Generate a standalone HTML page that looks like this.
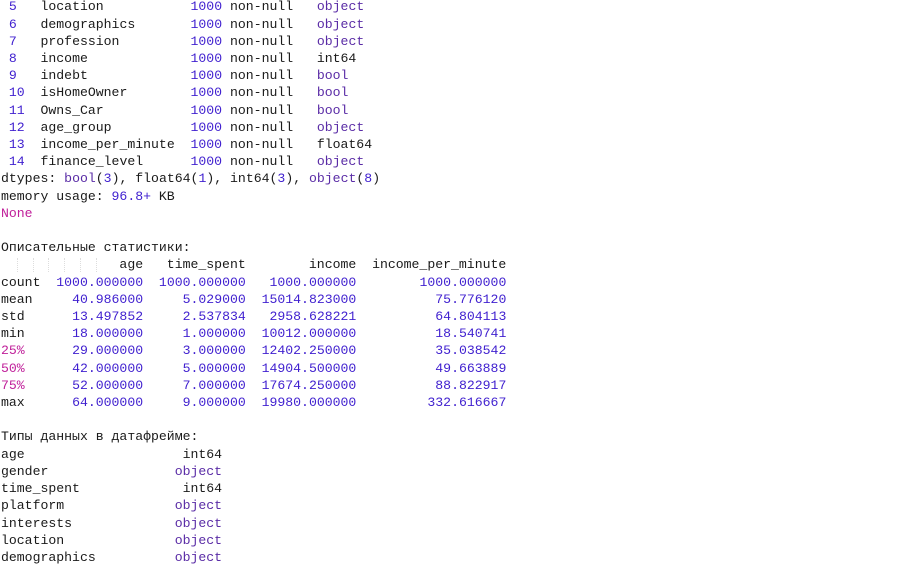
<!DOCTYPE html>
<html><head><meta charset="utf-8"><style>
html,body{margin:0;padding:0;background:#fff;width:900px;height:567px;overflow:hidden}
pre{margin:0;position:absolute;left:1px;top:-1.6px;font-family:"Liberation Mono","DejaVu Sans Mono",monospace;font-size:13.17px;line-height:17.2px;color:#1a1a1a}
.n{color:#3f1fcf}
.t{color:#5a2ca6}
.m{color:#c0209a}
.g{position:absolute;top:258px;height:14px;width:0;border-left:1px dotted #ddd}
</style></head><body>
<pre> <span class="n">5</span>   location           <span class="n">1000</span> non-null   <span class="t">object</span>
 <span class="n">6</span>   demographics       <span class="n">1000</span> non-null   <span class="t">object</span>
 <span class="n">7</span>   profession         <span class="n">1000</span> non-null   <span class="t">object</span>
 <span class="n">8</span>   income             <span class="n">1000</span> non-null   int64
 <span class="n">9</span>   indebt             <span class="n">1000</span> non-null   <span class="t">bool</span>
 <span class="n">10</span>  isHomeOwner        <span class="n">1000</span> non-null   <span class="t">bool</span>
 <span class="n">11</span>  Owns_Car           <span class="n">1000</span> non-null   <span class="t">bool</span>
 <span class="n">12</span>  age_group          <span class="n">1000</span> non-null   <span class="t">object</span>
 <span class="n">13</span>  income_per_minute  <span class="n">1000</span> non-null   float64
 <span class="n">14</span>  finance_level      <span class="n">1000</span> non-null   <span class="t">object</span>
dtypes: <span class="t">bool</span>(<span class="n">3</span>), float64(<span class="n">1</span>), int64(<span class="n">3</span>), <span class="t">object</span>(<span class="n">8</span>)
memory usage: <span class="n">96.8+</span> KB
<span class="m">None</span>

Описательные статистики:
               age   time_spent        income  income_per_minute
count  <span class="n">1000.000000</span>  <span class="n">1000.000000</span>   <span class="n">1000.000000</span>        <span class="n">1000.000000</span>
mean     <span class="n">40.986000</span>     <span class="n">5.029000</span>  <span class="n">15014.823000</span>          <span class="n">75.776120</span>
std      <span class="n">13.497852</span>     <span class="n">2.537834</span>   <span class="n">2958.628221</span>          <span class="n">64.804113</span>
min      <span class="n">18.000000</span>     <span class="n">1.000000</span>  <span class="n">10012.000000</span>          <span class="n">18.540741</span>
<span class="m">25%</span>      <span class="n">29.000000</span>     <span class="n">3.000000</span>  <span class="n">12402.250000</span>          <span class="n">35.038542</span>
<span class="m">50%</span>      <span class="n">42.000000</span>     <span class="n">5.000000</span>  <span class="n">14904.500000</span>          <span class="n">49.663889</span>
<span class="m">75%</span>      <span class="n">52.000000</span>     <span class="n">7.000000</span>  <span class="n">17674.250000</span>          <span class="n">88.822917</span>
max      <span class="n">64.000000</span>     <span class="n">9.000000</span>  <span class="n">19980.000000</span>         <span class="n">332.616667</span>

Типы данных в датафрейме:
age                    int64
gender                <span class="t">object</span>
time_spent             int64
platform              <span class="t">object</span>
interests             <span class="t">object</span>
location              <span class="t">object</span>
demographics          <span class="t">object</span></pre>
<div class="g" style="left:17px"></div><div class="g" style="left:33px"></div><div class="g" style="left:48px"></div><div class="g" style="left:64px"></div><div class="g" style="left:80px"></div><div class="g" style="left:96px"></div>
</body></html>
